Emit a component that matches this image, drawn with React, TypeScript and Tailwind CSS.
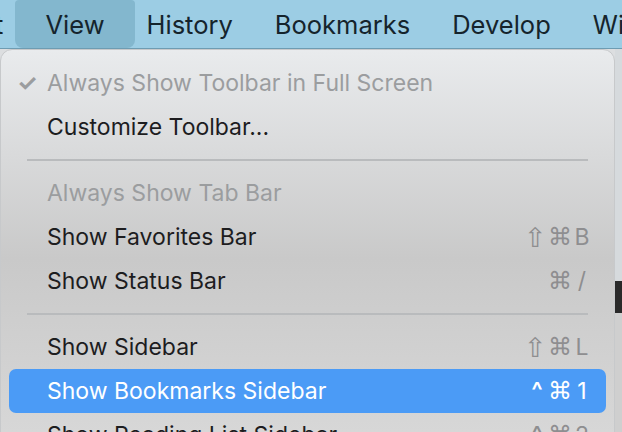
import React from 'react';

type Item = {
  label: string;
  shortcut?: string[];
  disabled?: boolean;
  checked?: boolean;
  active?: boolean;
};

const groups: Item[][] = [
  [
    { label: 'Always Show Toolbar in Full Screen', disabled: true, checked: true },
    { label: 'Customize Toolbar...' },
  ],
  [
    { label: 'Always Show Tab Bar', disabled: true },
    { label: 'Show Favorites Bar', shortcut: ['⇧', '⌘', 'B'] },
    { label: 'Show Status Bar', shortcut: ['⌘', '/'] },
  ],
  [
    { label: 'Show Sidebar', shortcut: ['⇧', '⌘', 'L'] },
    { label: 'Show Bookmarks Sidebar', shortcut: ['^', '⌘', '1'], active: true },
    { label: 'Show Reading List Sidebar', shortcut: ['^', '⌘', '2'] },
  ],
];

const menuBar = ['Edit', 'View', 'History', 'Bookmarks', 'Develop', 'Window'];

const keyClass = (k: string) => {
  if (k === '⇧') return "font-['DejaVu_Sans'] text-[27px] w-[22px]";
  if (k === '⌘') return "font-['DejaVu_Sans'] text-[24px] w-[22px]";
  if (k === '^') return 'text-[24px] font-semibold w-[18px]';
  return 'w-[20px]';
};

const MenuRow = ({ item }: { item: Item }) => {
  const text = item.active
    ? 'text-white'
    : item.disabled
      ? 'text-[#9b9d9f]'
      : 'text-[#1d1d1f]';
  return (
    <div
      className={`mx-[8px] h-[44px] flex items-center pl-[38px] pr-[14px] rounded-[7px] ${
        item.active ? 'bg-[#4b9bf6]' : ''
      }`}
    >
      <div className={`relative flex-1 text-[23px] whitespace-nowrap ${text}`}>
        {item.checked && (
          <span className="absolute left-[-30px] top-[0px] text-[23px] font-bold text-[#9b9d9f]">✓</span>
        )}
        {item.label}
      </div>
      {item.shortcut && (
        <div
          className={`flex items-center gap-[2px] text-[23px] ${
            item.active ? 'text-white' : 'text-[#8e8e90]'
          }`}
        >
          {item.shortcut.map((k, i) => (
            <span key={i} className={`text-center leading-none ${keyClass(k)}`}>
              {k}
            </span>
          ))}
        </div>
      )}
    </div>
  );
};

const App: React.FC = () => {
  return (
    <div className="w-[622px] h-[432px] overflow-hidden bg-[#dcdee0] font-['Inter','Helvetica','Arial',sans-serif]">
      {/* Menu bar */}
      <div className="h-[49px] flex items-stretch bg-[#9ccde4] border-b border-[#6e9cb2] text-[25.5px] text-[#15242c] whitespace-nowrap">
        <div className="flex items-stretch -ml-[63px]">
          {menuBar.map((m) => (
            <div
              key={m}
              className={`flex items-center pt-[2px] ${
                m === 'View' ? 'px-[30px] -mx-[9px] bg-[#83b7ce] rounded-[8px] rounded-t-[4px]' : 'px-[21px]'
              }`}
            >
              {m}
            </div>
          ))}
        </div>
      </div>

      <div className="flex h-[383px]">
        {/* Dropdown menu */}
        <div className="w-[615px] shrink-0 h-[420px] rounded-t-[12px] border border-[#c7c9cb] bg-gradient-to-b from-[#e9ebed] via-[#c9c9c9] to-[#dadada] pt-[11px]">
          {groups.map((g, gi) => (
            <div key={gi}>
              {gi > 0 && (
                <div className="h-[22px] flex items-center px-[26px]">
                  <div className="h-[2px] w-full bg-[#b9bbbd]" />
                </div>
              )}
              {g.map((item) => (
                <MenuRow key={item.label} item={item} />
              ))}
            </div>
          ))}
        </div>
        <div className="flex-1 flex flex-col">
          <div className="h-[232px] bg-[#d6dadd]" />
          <div className="h-[32px] bg-[#2a2a2a]" />
          <div className="flex-1 bg-[#cfcfcf]" />
        </div>
      </div>
    </div>
  );
};

export default App;
